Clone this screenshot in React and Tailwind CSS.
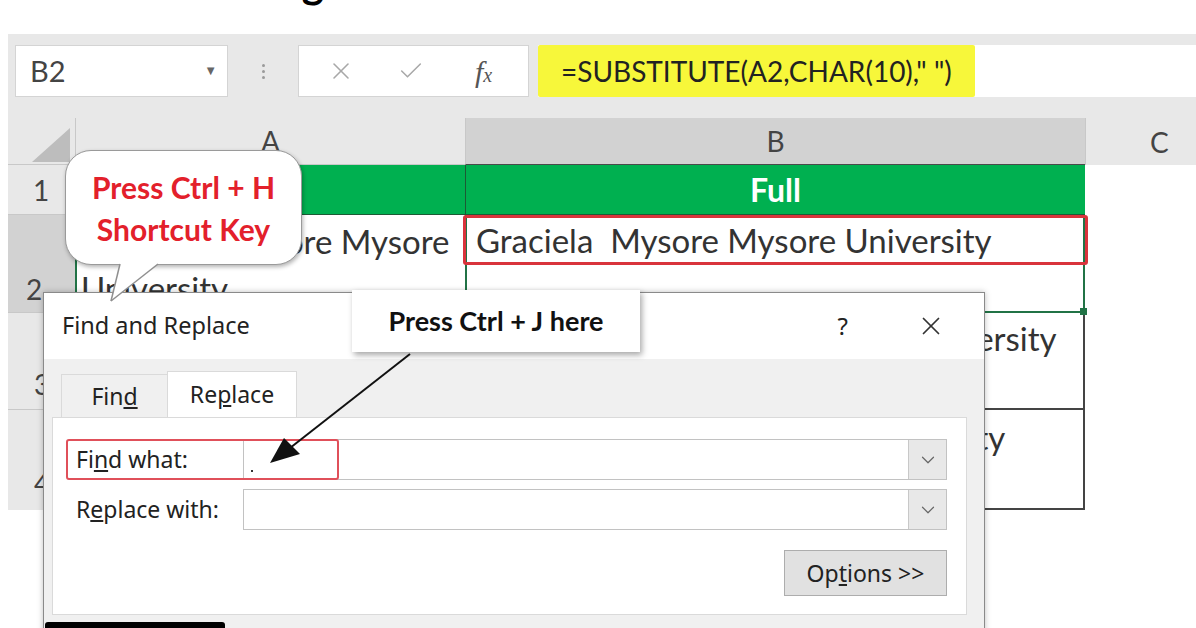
import { X, Check, ChevronDown } from "lucide-react";

const cell = "font-['Lato','Liberation_Sans',sans-serif]";

function Underlined({ before, letter, after }) {
  return (
    <span>
      {before}
      <span className="underline underline-offset-2">{letter}</span>
      {after}
    </span>
  );
}

export default function App() {
  return (
    <div className="relative w-[1196px] h-[628px] overflow-hidden bg-white font-['Lato','Liberation_Sans',sans-serif] text-[#333]">
      {/* article heading, cut off by the crop */}
      <div className="h-[34px] overflow-hidden">
        <div className="-mt-[39px] text-center text-[42px] font-bold leading-[42px] text-black">
          Removing Line Breaks in Excel Cells with Formula
        </div>
      </div>

      <div className="ml-[8px] bg-[#e8e8e8]">
        {/* formula bar */}
        <div className="flex h-[84px] items-start pt-[11px]">
          <div className="ml-[7px] flex h-[52px] w-[213px] items-center justify-between border border-[#d4d4d4] bg-white pl-[14px] pr-[10px]">
            <span className="text-[29px] text-[#444]">B2</span>
            <span className="text-[13px] text-[#666]">▼</span>
          </div>
          <div className="flex h-[52px] w-[70px] flex-col items-center justify-center gap-[3px]">
            <span className="h-[3px] w-[3px] rounded-full bg-[#9a9a9a]" />
            <span className="h-[3px] w-[3px] rounded-full bg-[#9a9a9a]" />
            <span className="h-[3px] w-[3px] rounded-full bg-[#9a9a9a]" />
          </div>
          <div className="flex h-[52px] w-[231px] items-center border border-[#d4d4d4] bg-white pl-[28px]">
            <X size={28} strokeWidth={1.3} className="text-[#a8a8a8]" />
            <Check size={28} strokeWidth={1.3} className="ml-[42px] text-[#a8a8a8]" />
            <span className="ml-[50px] font-['Liberation_Serif',serif] text-[30px] italic text-[#555]">
              f<span className="text-[20px]">x</span>
            </span>
          </div>
          <div className="ml-[9px] flex h-[52px] flex-1 items-stretch bg-white">
            <div className="flex w-[437px] items-center rounded-[2px] bg-[#f7f73a] pl-[23px] text-[28px] text-[#222]">
              =SUBSTITUTE(A2,CHAR(10),&quot; &quot;)
            </div>
          </div>
        </div>

        {/* spreadsheet grid */}
        <div className={`grid grid-cols-[67px_390px_620px_1fr] grid-rows-[47px_50px_98px_97px_100px] ${cell}`}>
          {/* header row */}
          <div className="relative border-b border-[#c8c8c8]">
            <svg className="absolute left-[22px] top-[10px]" width="40" height="34" viewBox="0 0 40 34">
              <polygon points="40,0 40,34 2,34" fill="#bdbdbd" />
            </svg>
          </div>
          <div className="flex items-center justify-center border-b border-l border-[#c8c8c8] text-[28px] text-[#444]">A</div>
          <div className="flex items-center justify-center border-b border-l border-b-[#4a4a4a] border-l-[#c8c8c8] bg-[#d2d2d2] text-[28px] text-[#444]">B</div>
          <div className="flex items-center pl-[64px] text-[28px] text-[#444] border-l border-[#c8c8c8]">C</div>

          {/* row 1 */}
          <div className="flex items-center pl-[25px] text-[28px] text-[#444] border-b border-[#c8c8c8]">1</div>
          <div className="bg-[#00b050] border-b border-[#1d5a35]" />
          <div className="flex items-center justify-center border-b border-l border-[#1d5a35] bg-[#00b050] text-[32px] font-bold text-white">Full</div>
          <div className="bg-white" />

          {/* row 2 */}
          <div className="flex items-end pb-[2px] pl-[18px] text-[28px] text-[#444] bg-[#d2d2d2] border-b border-[#c8c8c8]">2</div>
          <div className="overflow-hidden border-l-2 border-[#217346] bg-white pl-[4px] pt-[3px] text-[33px] leading-[47px] text-[#333] whitespace-pre">
            {"Graciela   Mysore Mysore\nUniversity"}
          </div>
          <div className="relative border-l-2 border-r-2 border-b-2 border-[#217346] bg-white">
            <div className="absolute -left-[4px] -right-[5px] top-0 h-[50px] rounded-[3px] border-[3px] border-[#d9343c] pl-[10px] text-[33px] leading-[44px] text-[#333] whitespace-pre">
              {"Graciela  Mysore Mysore University"}
            </div>
            <span className="absolute -bottom-[4px] -right-[4px] h-[7px] w-[7px] bg-[#217346]" />
          </div>
          <div className="bg-white" />

          {/* row 3 */}
          <div className="flex items-end pb-[4px] pl-[26px] text-[28px] text-[#444] border-b border-[#c8c8c8]">3</div>
          <div className="bg-white" />
          <div className="overflow-hidden border-r-2 border-b-2 border-[#444] bg-white pl-[10px] pt-[1px] text-[33px] text-[#333] whitespace-pre">
            {"Rajesha  Bangalore Bangalore University"}
          </div>
          <div className="bg-white" />

          {/* row 4 */}
          <div className="flex items-end pb-[6px] pl-[26px] text-[28px] text-[#444]">4</div>
          <div className="bg-white" />
          <div className="overflow-hidden border-r-2 border-b-2 border-[#444] bg-white pl-[10px] pt-[3px] text-[33px] text-[#333] whitespace-pre">
            {"Satish  Mysore Mangalore University"}
          </div>
          <div className="bg-white" />
        </div>
      </div>

      {/* Find and Replace dialog */}
      <div className="absolute left-[43px] top-[292px] h-[360px] w-[942px] border-x border-t border-[#8a8a8a] bg-[#f0f0f0] font-['Noto_Sans','Open_Sans',sans-serif] text-[#222] shadow-[0_0_6px_rgba(0,0,0,0.25)]">
        <div className="flex h-[66px] items-center bg-white pl-[18px] pr-[38px]">
          <span className="text-[23.5px]">Find and Replace</span>
          <span className="ml-auto text-[24px]">?</span>
          <X size={30} strokeWidth={1.4} className="ml-[68px] text-[#333]" />
        </div>
        <div className="flex items-end pl-[17px] pt-[12px]">
          <div className="flex h-[43px] w-[106px] items-center justify-center border-t border-l border-[#dadada] text-[23px]">
            <Underlined before="Fin" letter="d" after="" />
          </div>
          <div className="flex h-[46px] w-[130px] items-center justify-center border-x border-t border-[#dadada] bg-white text-[23px]">
            <Underlined before="Re" letter="p" after="lace" />
          </div>
        </div>
        <div className="ml-[8px] mr-[17px] h-[198px] border border-[#dadada] bg-white pl-[12px] pr-[19px] pt-[21px]">
          <div className="relative flex h-[41px] items-center">
            <span className="w-[178px] pl-[11px] text-[23px]">
              <Underlined before="Fi" letter="n" after="d what:" />
            </span>
            <div className="relative flex h-[41px] flex-1 items-center border border-[#c2c2c2] bg-white">
              <span className="absolute left-[7px] top-[30px] h-[2px] w-[2px] bg-[#333]" />
              <div className="ml-auto flex h-full w-[38px] items-center justify-center border-l border-[#c8c8c8] bg-[#e8e8e8]">
                <ChevronDown size={22} strokeWidth={1.3} className="text-[#666]" />
              </div>
            </div>
            <div className="absolute left-[1px] top-0 h-[41px] w-[273px] rounded-[3px] border-2 border-[#e0505a]" />
          </div>
          <div className="mt-[9px] flex h-[41px] items-center">
            <span className="w-[178px] pl-[11px] text-[23px]">
              <Underlined before="R" letter="e" after="place with:" />
            </span>
            <div className="flex h-[41px] flex-1 items-center border border-[#c2c2c2] bg-white">
              <div className="ml-auto flex h-full w-[38px] items-center justify-center border-l border-[#c8c8c8] bg-[#e8e8e8]">
                <ChevronDown size={22} strokeWidth={1.3} className="text-[#666]" />
              </div>
            </div>
          </div>
          <div className="mt-[20px] flex justify-end">
            <div className="flex h-[46px] w-[163px] items-center justify-center border border-[#adadad] bg-[#e1e1e1] text-[23px]">
              <Underlined before="Op" letter="t" after="ions >>" />
            </div>
          </div>
        </div>
      </div>

      {/* black strip at the bottom */}
      <div className="absolute bottom-0 left-[45px] h-[6px] w-[180px] rounded-t-[3px] bg-black" />

      {/* callout: Press Ctrl + H */}
      <div className="absolute left-[65px] top-[150px] flex h-[115px] w-[237px] flex-col items-center justify-center rounded-[26px] border border-[#9a9a9a] bg-white font-bold text-[30px] leading-[42px] text-[#e3202b] shadow-[1px_2px_4px_rgba(0,0,0,0.3)]">
        <span>Press Ctrl + H</span>
        <span>Shortcut Key</span>
      </div>
      <svg className="absolute left-[100px] top-[250px]" width="70" height="56" viewBox="0 0 70 56">
        <polygon points="20,14 58,14 11,51" fill="white" />
        <line x1="20" y1="14" x2="11" y2="51" stroke="#8f8f8f" strokeWidth="1.5" />
        <line x1="58" y1="14" x2="11" y2="51" stroke="#8f8f8f" strokeWidth="1.5" />
      </svg>

      {/* callout: Press Ctrl + J */}
      <div className="absolute left-[352px] top-[290px] flex h-[62px] w-[288px] items-center justify-center bg-white text-[27px] font-bold text-[#111] shadow-[2px_3px_6px_rgba(0,0,0,0.35)]">
        Press Ctrl + J here
      </div>

      {/* arrow */}
      <svg className="absolute left-[260px] top-[350px]" width="160" height="120" viewBox="0 0 160 120">
        <line x1="150" y1="4" x2="30" y2="98" stroke="#111" strokeWidth="2" />
        <polygon points="10,113 24,88 40,104" fill="#111" />
      </svg>
    </div>
  );
}
